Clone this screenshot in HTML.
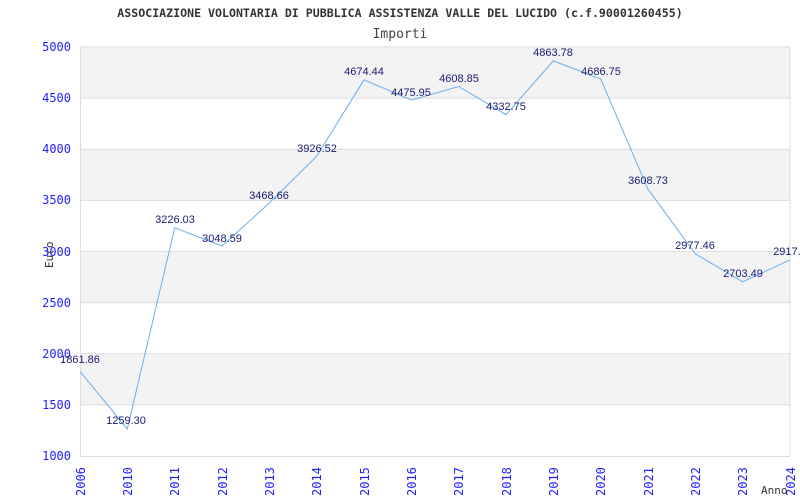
<!DOCTYPE html>
<html><head><style>body{margin:0;background:#fff}svg{display:block}</style></head><body>
<svg width="800" height="500" xmlns="http://www.w3.org/2000/svg">
<rect width="800" height="500" fill="#fff"/>
<text x="400" y="17" text-anchor="middle" font-family="DejaVu Sans Mono, Liberation Mono, monospace" font-weight="bold" font-size="11.6" fill="#333">ASSOCIAZIONE VOLONTARIA DI PUBBLICA ASSISTENZA VALLE DEL LUCIDO (c.f.90001260455)</text>
<text x="400" y="38" text-anchor="middle" font-family="DejaVu Sans Mono, monospace" font-size="13" fill="#444">Importi</text>
<g fill="#f3f3f3">
<rect x="80" y="47" width="710" height="51.1"/>
<rect x="80" y="149.3" width="710" height="51.1"/>
<rect x="80" y="251.5" width="710" height="51.1"/>
<rect x="80" y="353.7" width="710" height="51.1"/>
</g>
<g stroke="#ddd" stroke-width="1">
<line x1="80" y1="98.1" x2="790" y2="98.1"/><line x1="80" y1="149.3" x2="790" y2="149.3"/>
<line x1="80" y1="200.4" x2="790" y2="200.4"/><line x1="80" y1="251.5" x2="790" y2="251.5"/>
<line x1="80" y1="302.6" x2="790" y2="302.6"/><line x1="80" y1="353.7" x2="790" y2="353.7"/>
<line x1="80" y1="404.9" x2="790" y2="404.9"/>
<line x1="80.5" y1="47" x2="790" y2="47"/>
<line x1="80.5" y1="47" x2="80.5" y2="456.5"/><line x1="80" y1="456.5" x2="790" y2="456.5"/>
<line x1="790" y1="47" x2="790" y2="456"/>
</g>
<g font-family="DejaVu Sans Mono, monospace" font-size="12" fill="#22f" text-anchor="end">
<text x="71" y="51">5000</text><text x="71" y="102">4500</text><text x="71" y="153">4000</text>
<text x="71" y="204">3500</text><text x="71" y="256">3000</text><text x="71" y="307">2500</text>
<text x="71" y="358">2000</text><text x="71" y="409">1500</text><text x="71" y="460">1000</text>
</g>
<polyline fill="none" stroke="#6aaef0" stroke-width="1" points="80,371.4 127.3,429 174.7,227.8 222,246 269.3,203 316.7,156.2 364,79.8 411.3,100.1 458.7,86.5 506,114.7 553.3,60.9 600.7,79 648,189.2 695.3,253.8 742.7,281.8 790,259.9"/>
<g font-family="Liberation Sans, sans-serif" font-size="11" fill="#1a1a70" text-anchor="middle">
<text x="80" y="363">1861.86</text><text x="126" y="424">1259.30</text><text x="175" y="223">3226.03</text>
<text x="222" y="242">3048.59</text><text x="269" y="199">3468.66</text><text x="317" y="152">3926.52</text>
<text x="364" y="75">4674.44</text><text x="411" y="96">4475.95</text><text x="459" y="82">4608.85</text>
<text x="506" y="110">4332.75</text><text x="553" y="56">4863.78</text><text x="601" y="75">4686.75</text>
<text x="648" y="184">3608.73</text><text x="695" y="249">2977.46</text><text x="743" y="277">2703.49</text>
<text x="790" y="255">2917.6</text>
</g>
<g font-family="DejaVu Sans Mono, monospace" font-size="12" fill="#22f">
<text transform="translate(85,496) rotate(-90)">2006</text>
<text transform="translate(132,496) rotate(-90)">2010</text>
<text transform="translate(179,496) rotate(-90)">2011</text>
<text transform="translate(227,496) rotate(-90)">2012</text>
<text transform="translate(274,496) rotate(-90)">2013</text>
<text transform="translate(321,496) rotate(-90)">2014</text>
<text transform="translate(369,496) rotate(-90)">2015</text>
<text transform="translate(416,496) rotate(-90)">2016</text>
<text transform="translate(463,496) rotate(-90)">2017</text>
<text transform="translate(511,496) rotate(-90)">2018</text>
<text transform="translate(558,496) rotate(-90)">2019</text>
<text transform="translate(605,496) rotate(-90)">2020</text>
<text transform="translate(653,496) rotate(-90)">2021</text>
<text transform="translate(700,496) rotate(-90)">2022</text>
<text transform="translate(747,496) rotate(-90)">2023</text>
<text transform="translate(795,496) rotate(-90)">2024</text>
</g>
<text transform="translate(53,268) rotate(-90)" font-family="DejaVu Sans Mono, monospace" font-size="11" fill="#333">Euro</text>
<text x="761" y="494" font-family="DejaVu Sans Mono, monospace" font-size="11" fill="#333">Anno</text>
</svg>
</body></html>
